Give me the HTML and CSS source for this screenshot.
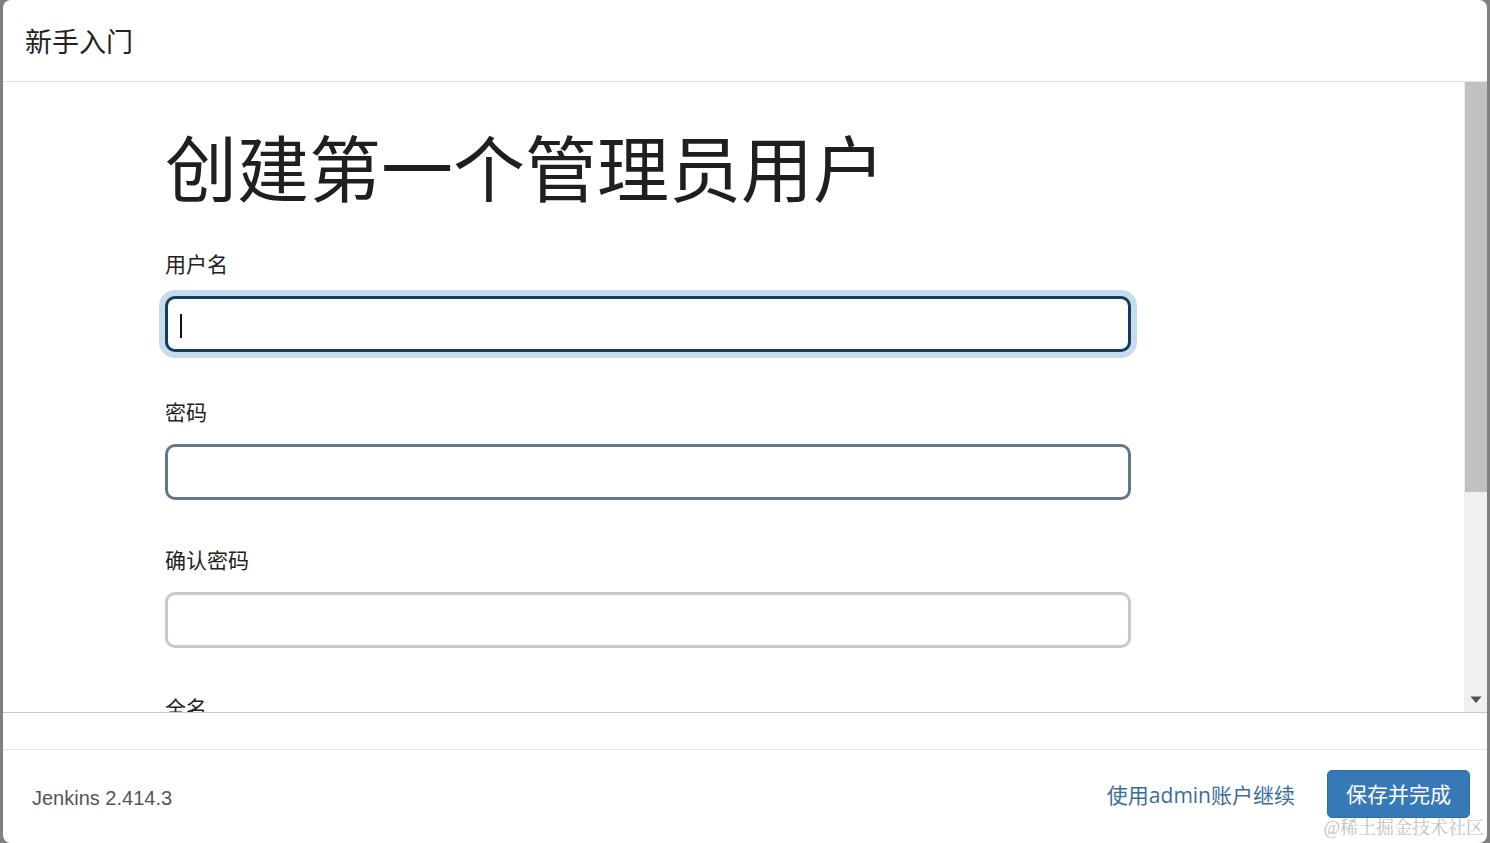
FILE: index.html
```html
<!DOCTYPE html>
<html lang="zh-CN">
<head>
<meta charset="utf-8">
<title>新手入门</title>
<link rel="stylesheet" href="styles.css">
</head>
<body>
<div class="dialog">
  <div class="header"><span class="title">新手入门</span></div>
  <div class="body-wrap">
    <div class="content">
      <h1 class="heading">创建第一个管理员用户</h1>
      <div class="field">
        <label class="label">用户名</label>
        <div class="input-box focused"><span class="caret"></span></div>
      </div>
      <div class="field">
        <label class="label">密码</label>
        <div class="input-box normal"></div>
      </div>
      <div class="field">
        <label class="label">确认密码</label>
        <div class="input-box light"></div>
      </div>
      <div class="field">
        <label class="label">全名</label>
        <div class="input-box light"></div>
      </div>
    </div>
    <div class="scrollbar">
      <div class="thumb"></div>
      <div class="track"></div>
      <div class="arrow"><svg width="12" height="8" viewBox="0 0 12 8"><polygon points="0.5,0.5 11.5,0.5 6,7" fill="#505050"/></svg></div>
    </div>
  </div>
  <div class="strip"></div>
  <div class="footer">
    <span class="version">Jenkins 2.414.3</span>
    <div class="actions">
      <a class="link">使用admin账户继续</a>
      <button class="btn">保存并完成</button>
    </div>
  </div>
  <div class="watermark">@稀土掘金技术社区</div>
</div>
</body>
</html>
```

FILE: styles.css
```css
html, body {
  margin: 0;
  padding: 0;
}
body {
  background: #808080;
  height: 843px;
  overflow: hidden;
  font-family: "Noto Sans CJK SC", "Noto Sans", sans-serif;
  color: #222;
}
.dialog {
  position: relative;
  margin: 0 3px 0 3px;
  height: 843px;
  background: #fff;
  border-radius: 8px;
  display: flex;
  flex-direction: column;
  overflow: hidden;
}
.header {
  flex: none;
  border-bottom: 1px solid #e2e2e2;
  display: flex;
  align-items: center;
  padding: 0 0 0 22px;
  box-sizing: border-box;
  height: 82px;
}
.title {
  font-size: 27px;
  line-height: 1;
  color: #222;
}
.body-wrap {
  height: 631px;
  box-sizing: border-box;
  flex: none;
  display: flex;
  border-bottom: 1px solid #c9c9c9;
}
.content {
  flex: 1;
  overflow: hidden;
  padding: 47px 0 0 162px;
}
.heading {
  margin: 0;
  font-size: 72px;
  line-height: 72px;
  font-weight: 400;
  color: #1f1f1f;
}
.field {
  display: flex;
  flex-direction: column;
  align-items: flex-start;
  margin-bottom: 49px;
}
.heading + .field {
  margin-top: 52px;
}
.label {
  font-size: 21px;
  line-height: 21px;
  color: #222;
  margin-bottom: 22px;
}
.input-box {
  position: relative;
  width: 966px;
  height: 56px;
  box-sizing: border-box;
  border-radius: 10px;
  border: 3px solid #c8c8c8;
  background: #fff;
}
.input-box.focused {
  border-color: #123d5e;
  box-shadow: 0 0 0 6px #c5dcea;
}
.input-box.normal {
  border-color: #627886;
}
.input-box.light {
  border-color: #c9c9c9;
}
.caret {
  position: absolute;
  left: 12px;
  top: 15px;
  width: 2px;
  height: 24px;
  background: #111;
}
.scrollbar {
  width: 23px;
  flex: none;
  background: #f0f0f0;
  display: flex;
  flex-direction: column;
  align-items: stretch;
}
.thumb {
  height: 410px;
  background: #c1c1c1;
  margin-left: 1px;
}
.track {
  flex: 1;
}
.arrow {
  height: 24px;
  box-sizing: border-box;
  display: flex;
  justify-content: center;
  align-items: flex-start;
  padding-top: 8px;
}
.strip {
  height: 37px;
  box-sizing: border-box;
  flex: none;
  border-bottom: 1px solid #e3e3e3;
}
.footer {
  flex: 1;
  display: flex;
  align-items: center;
  justify-content: space-between;
  padding: 0 17px 6px 29px;
}
.version {
  font-family: "Liberation Sans", Arial, sans-serif;
  font-size: 20px;
  color: #555;
  padding-top: 10px;
}
.actions {
  display: flex;
  align-items: center;
  gap: 32px;
}
.link {
  font-size: 21px;
  color: #3a6d9f;
  font-family: "Open Sans", "Noto Sans CJK SC", sans-serif;
  text-decoration: none;
  padding-top: 0;
}
.btn {
  height: 48px;
  padding: 0 18px;
  border: 1px solid #2e6da4;
  border-radius: 5px;
  background: #3779b7;
  color: #fff;
  font-family: "Noto Sans CJK SC", sans-serif;
  font-size: 21px;
  line-height: 1;
}
.watermark {
  position: absolute;
  right: 3px;
  bottom: 6px;
  font-family: "Liberation Serif", "Noto Serif CJK SC", "Noto Sans CJK SC", serif;
  font-size: 18px;
  line-height: 1;
  color: rgba(170, 170, 170, 0.75);
  pointer-events: none;
}
```
